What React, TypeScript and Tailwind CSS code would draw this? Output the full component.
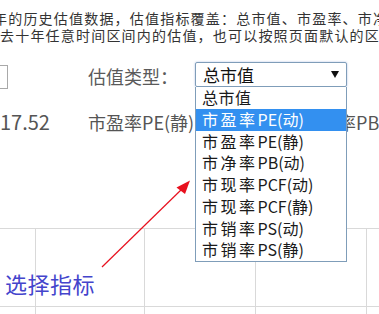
import React from "react";

const font = { fontFamily: '"Noto Sans CJK SC", "Noto Sans", sans-serif' };

const items: { zh: string; rest: string }[] = [
  { zh: "总市值", rest: "" },
  { zh: "市盈率", rest: "PE(动)" },
  { zh: "市盈率", rest: "PE(静)" },
  { zh: "市净率", rest: "PB(动)" },
  { zh: "市现率", rest: "PCF(动)" },
  { zh: "市现率", rest: "PCF(静)" },
  { zh: "市销率", rest: "PS(动)" },
  { zh: "市销率", rest: "PS(静)" },
];

export default function App() {
  return (
    <div
      className="relative w-[379px] h-[314px] overflow-hidden bg-white"
      style={font}
    >
      {/* intro text */}
      <div className="pt-[10px] ml-[-7px] text-[14px] leading-[17px] tracking-[1.2px] text-[#333] whitespace-nowrap">
        <div>年的历史估值数据，估值指标覆盖：总市值、市盈率、市净率</div>
        <div className="ml-[7px]">去十年任意时间区间内的估值，也可以按照页面默认的区间</div>
      </div>

      {/* controls row */}
      <div className="mt-[18px] flex items-start h-[27px]">
        <div className="ml-[-12px] mt-[3px] w-[20px] h-[24px] border border-[#a9a9a9] shrink-0" />
        <div className="ml-[80px] mt-[1px] w-[107px] shrink-0 text-[18px] leading-[26px] text-[#5a5a5a] whitespace-nowrap">
          估值类型：
        </div>
        <div className="w-[152px] h-[25px] shrink-0 border border-[#7f9db9] rounded-[2px] flex items-center justify-between pl-[7px] pr-[7px] text-[17px] text-[#111] shadow-[0_0_2px_rgba(80,120,200,0.5)]">
          <span className="leading-[23px]">总市值</span>
          <svg width="8" height="7" viewBox="0 0 8 7" className="mb-[1px]">
            <polygon points="0,0 8,0 4,7" fill="#111" />
          </svg>
        </div>
      </div>

      {/* values row */}
      <div className="mt-[20px] flex items-center h-[26px] text-[#555] whitespace-nowrap">
        <div className="w-[88px] shrink-0 text-[20px] leading-[26px]">17.52</div>
        <div className="w-[214px] shrink-0 text-[18px] leading-[26px]">市盈率PE(静)</div>
        <div className="shrink-0 text-[18px] leading-[26px]">市净率PB(动)</div>
      </div>

      {/* grid */}
      <div className="mt-[93px] border-t border-[#d9d9d9] flex h-[78px]">
        <div className="w-[35px] shrink-0" />
        <div className="w-[109px] shrink-0 border-l border-[#d9d9d9]" />
        <div className="w-[111px] shrink-0 border-l border-[#d9d9d9]" />
        <div className="w-[111px] shrink-0 border-l border-[#d9d9d9]" />
        <div className="flex-1 border-l border-[#d9d9d9]" />
      </div>
      <div className="border-t border-[#d9d9d9] flex h-[10px]">
        <div className="w-[35px] shrink-0" />
        <div className="w-[109px] shrink-0 border-l border-[#d9d9d9]" />
        <div className="w-[111px] shrink-0 border-l border-[#d9d9d9]" />
        <div className="w-[111px] shrink-0 border-l border-[#d9d9d9]" />
        <div className="flex-1 border-l border-[#d9d9d9]" />
      </div>

      {/* open dropdown list */}
      <div className="absolute left-[195px] top-[87px] w-[152px] bg-white border-l border-r border-b border-[#7f9db9]">
        {items.map((it, i) => {
          const active = i === 1;
          return (
            <div
              key={i}
              className={
                "h-[21.75px] pl-[6px] flex items-center text-[16px] leading-[21.75px] whitespace-nowrap " +
                (active ? "bg-[#3390f0] text-white" : "text-[#1a1a1a]")
              }
            >
              <span className={i === 0 ? "tracking-[0.5px]" : "tracking-[2.5px]"}>
                {it.zh}
              </span>
              <span>{it.rest}</span>
            </div>
          );
        })}
      </div>

      {/* annotation arrow */}
      <svg
        className="absolute left-0 top-0 pointer-events-none"
        width="379"
        height="314"
        viewBox="0 0 379 314"
      >
        <line x1="102" y1="267" x2="183" y2="188" stroke="#e8101e" strokeWidth="1.2" />
        <polygon points="190,180.5 176.5,187.5 185,194" fill="#e8101e" />
      </svg>

      {/* annotation label */}
      <div className="absolute left-[5px] top-[271px] text-[22px] leading-[24px] text-[#4444cc] tracking-[0.5px] whitespace-nowrap">
        选择指标
      </div>
    </div>
  );
}
